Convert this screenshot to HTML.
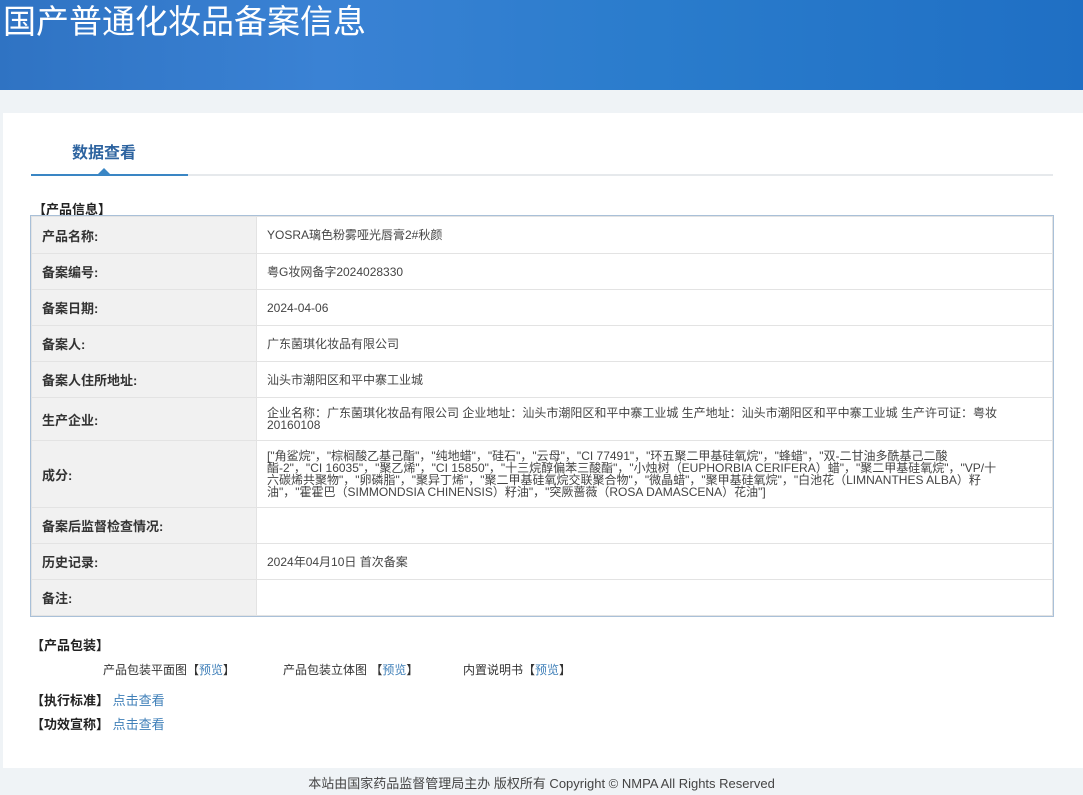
<!DOCTYPE html>
<html><head><meta charset="utf-8"><style>
*{margin:0;padding:0;box-sizing:border-box}
body{width:1083px;height:795px;background:#eff3f6;font-family:"Liberation Sans","Noto Sans CJK SC",sans-serif;color:#333;position:relative;overflow:hidden}
.hd{position:absolute;left:0;top:0;width:1083px;height:90px;background:linear-gradient(90deg,#2f73c3 0%,#3a82d4 30%,#2a7ccc 60%,#1f6fc4 100%);overflow:hidden}
.hd h1{position:absolute;left:3px;top:1px;font-size:33px;font-weight:normal;color:#fff;letter-spacing:0;line-height:42px}
.panel{position:absolute;left:3px;top:113px;width:1080px;height:655px;background:#fff}
.tab{position:absolute;left:72px;top:139px;font-size:16px;font-weight:bold;color:#2e64a0}
.tl{position:absolute;left:31px;top:174px;width:1022px;height:2px;background:#e6e9ec}
.tlb{position:absolute;left:31px;top:174px;width:157px;height:2px;background:#3a86c4}
.tri{position:absolute;left:98px;top:168px;width:0;height:0;border-left:6px solid transparent;border-right:6px solid transparent;border-bottom:6px solid #3a86c4}
.sec{position:absolute;font-size:13px;font-weight:bold;color:#222}
table{position:absolute;left:31px;top:216px;width:1022px;border-collapse:collapse;outline:1px solid #a9c0d8}
td{border:1px solid #e3e3e3;font-size:12px;vertical-align:middle}
td.l{width:225px;background:#f1f1f1;font-weight:bold;font-size:13px;padding-left:10px;color:#333}
td.v{padding:0 10px;color:#444;line-height:12px}
.t{position:absolute;font-size:12px;color:#333}
a{color:#3f7fb8;text-decoration:none}
.ft{position:absolute;left:0;top:773px;width:1083px;text-align:center;font-size:13px;color:#444}
</style></head><body>
<div class="hd"><h1>国产普通化妆品备案信息</h1></div>
<div class="panel"></div>
<div class="tab">数据查看</div>
<div class="tl"></div><div class="tlb"></div><div class="tri"></div>
<div class="sec" style="left:33px;top:199px">【产品信息】</div>
<table>
<tr style="height:37px"><td class="l">产品名称:</td><td class="v">YOSRA璃色粉雾哑光唇膏2#秋颜</td></tr>
<tr style="height:36px"><td class="l">备案编号:</td><td class="v">粤G妆网备字2024028330</td></tr>
<tr style="height:36px"><td class="l">备案日期:</td><td class="v">2024-04-06</td></tr>
<tr style="height:36px"><td class="l">备案人:</td><td class="v">广东菌琪化妆品有限公司</td></tr>
<tr style="height:36px"><td class="l">备案人住所地址:</td><td class="v">汕头市潮阳区和平中寨工业城</td></tr>
<tr style="height:43px"><td class="l">生产企业:</td><td class="v" style="padding-right:50px">企业名称：广东菌琪化妆品有限公司 企业地址：汕头市潮阳区和平中寨工业城 生产地址：汕头市潮阳区和平中寨工业城 生产许可证：粤妆20160108</td></tr>
<tr style="height:67px"><td class="l">成分:</td><td class="v" style="padding-right:55px">["角鲨烷"，"棕榈酸乙基己酯"，"纯地蜡"，"硅石"，"云母"，"CI 77491"，"环五聚二甲基硅氧烷"，"蜂蜡"，"双-二甘油多酰基己二酸酯-2"，"CI 16035"，"聚乙烯"，"CI 15850"，"十三烷醇偏苯三酸酯"，"小烛树（EUPHORBIA CERIFERA）蜡"，"聚二甲基硅氧烷"，"VP/十六碳烯共聚物"，"卵磷脂"，"聚异丁烯"，"聚二甲基硅氧烷交联聚合物"，"微晶蜡"，"聚甲基硅氧烷"，"白池花（LIMNANTHES ALBA）籽油"，"霍霍巴（SIMMONDSIA CHINENSIS）籽油"，"突厥蔷薇（ROSA DAMASCENA）花油"]</td></tr>
<tr style="height:36px"><td class="l">备案后监督检查情况:</td><td class="v"></td></tr>
<tr style="height:36px"><td class="l">历史记录:</td><td class="v">2024年04月10日 首次备案</td></tr>
<tr style="height:36px"><td class="l">备注:</td><td class="v"></td></tr>
</table>
<div class="sec" style="left:31px;top:635px">【产品包装】</div>
<div class="t" style="left:103px;top:661px">产品包装平面图【<a>预览</a>】</div>
<div class="t" style="left:283px;top:661px">产品包装立体图 【<a>预览</a>】</div>
<div class="t" style="left:463px;top:661px">内置说明书【<a>预览</a>】</div>
<div class="sec" style="left:31px;top:690px">【执行标准】 <a style="font-weight:normal">点击查看</a></div>
<div class="sec" style="left:31px;top:714px">【功效宣称】 <a style="font-weight:normal">点击查看</a></div>
<div class="ft">本站由国家药品监督管理局主办 版权所有 Copyright © NMPA All Rights Reserved</div>
</body></html>
